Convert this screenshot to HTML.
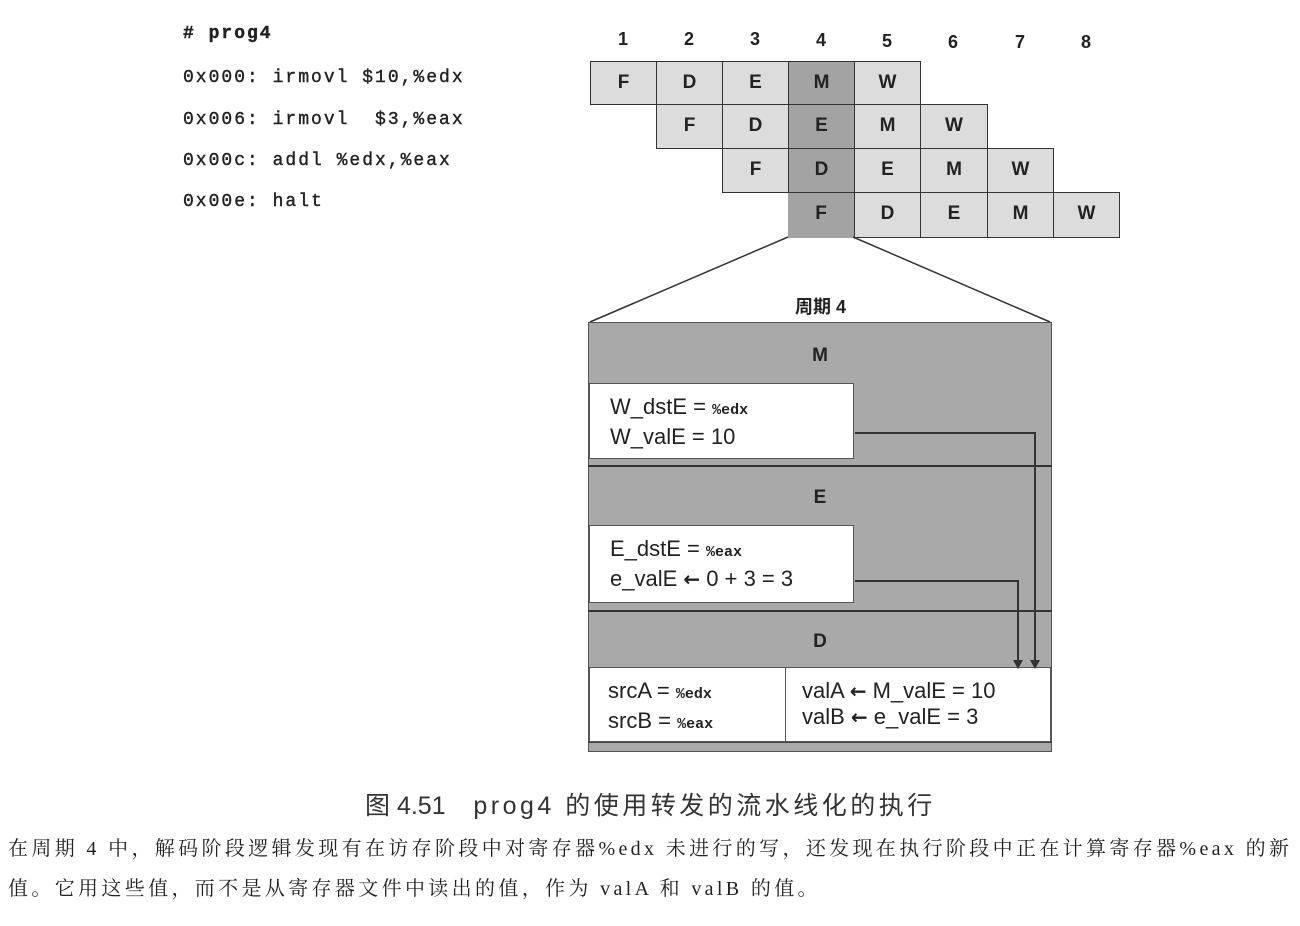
<!DOCTYPE html>
<html><head><meta charset="utf-8"><style>
body{margin:0;width:1300px;height:926px;background:#fff;position:relative;overflow:hidden;font-family:"Liberation Sans","Noto Sans CJK SC",sans-serif;color:#222}
.a{position:absolute}
.code{font-family:"Liberation Mono",monospace;font-size:18px;letter-spacing:2px;color:#222;white-space:pre;-webkit-text-stroke:0.4px #222}
.c{position:absolute;box-sizing:border-box;border:1.5px solid #333;background:#dcdcdc;font-weight:bold;font-size:19px;text-align:center;line-height:41px}
.n{position:absolute;font-weight:bold;font-size:18px;width:66px;text-align:center}
.box{position:absolute;background:#fff;box-sizing:border-box;border:1.5px solid #555;font-size:22px;line-height:26px;padding:10px 0 0 20px;color:#222}
.m{font-family:"Liberation Mono",monospace;font-weight:bold;font-size:15px}
.ar{font-family:"DejaVu Sans",sans-serif;font-weight:bold;font-size:20px}
.lab{position:absolute;left:588px;width:464px;text-align:center;font-weight:bold;font-size:19px}
.p{position:absolute;left:8px;font-family:'Liberation Serif','Noto Serif CJK SC',serif;font-size:20px;white-space:nowrap;letter-spacing:3.35px;color:#222}
</style></head><body>
<div class="a code" style="left:183px;top:24px;font-weight:bold"># prog4</div>
<div class="a code" style="left:183px;top:68px">0x000: irmovl $10,%edx</div>
<div class="a code" style="left:183px;top:110px">0x006: irmovl  $3,%eax</div>
<div class="a code" style="left:183px;top:151px">0x00c: addl %edx,%eax</div>
<div class="a code" style="left:183px;top:192px">0x00e: halt</div>

<div class="n" style="left:590px;top:29px">1</div><div class="n" style="left:656px;top:29px">2</div><div class="n" style="left:722px;top:29px">3</div><div class="n" style="left:788px;top:30px">4</div><div class="n" style="left:854px;top:31px">5</div><div class="n" style="left:920px;top:32px">6</div><div class="n" style="left:987px;top:32px">7</div><div class="n" style="left:1053px;top:32px">8</div>

<div class="c" style="left:590px;top:61px;width:67px;height:44px">F</div>
<div class="c" style="left:656px;top:61px;width:67px;height:44px">D</div>
<div class="c" style="left:722px;top:61px;width:67px;height:44px">E</div>
<div class="c" style="left:854px;top:61px;width:67px;height:44px">W</div>
<div class="c" style="left:656px;top:104px;width:67px;height:45px">F</div>
<div class="c" style="left:722px;top:104px;width:67px;height:45px">D</div>
<div class="c" style="left:854px;top:104px;width:67px;height:45px">M</div>
<div class="c" style="left:920px;top:104px;width:68px;height:45px">W</div>
<div class="c" style="left:722px;top:148px;width:67px;height:45px">F</div>
<div class="c" style="left:854px;top:148px;width:67px;height:45px">E</div>
<div class="c" style="left:920px;top:148px;width:68px;height:45px">M</div>
<div class="c" style="left:987px;top:148px;width:67px;height:45px">W</div>
<div class="c" style="left:854px;top:192px;width:67px;height:46px">D</div>
<div class="c" style="left:920px;top:192px;width:68px;height:46px">E</div>
<div class="c" style="left:987px;top:192px;width:67px;height:46px">M</div>
<div class="c" style="left:1053px;top:192px;width:67px;height:46px">W</div>
<div class="c" style="left:788px;top:61px;width:67px;height:44px;background:#a3a3a3">M</div>
<div class="c" style="left:788px;top:104px;width:67px;height:45px;background:#a3a3a3">E</div>
<div class="c" style="left:788px;top:148px;width:67px;height:45px;background:#a3a3a3">D</div>
<div class="c" style="left:788px;top:192px;width:67px;height:46px;background:#a3a3a3;border-left:none;border-bottom:none">F</div>

<svg class="a" style="left:0;top:0" width="1300" height="926">
<line x1="788" y1="237" x2="590" y2="322" stroke="#333" stroke-width="1.5"/>
<line x1="853" y1="237" x2="1050" y2="322" stroke="#333" stroke-width="1.5"/>
</svg>
<div class="a" style="left:795px;top:293px;font-size:18px;font-weight:bold">周期 4</div>

<div class="a" style="left:588px;top:322px;width:464px;height:430px;background:#a9a9a9;box-sizing:border-box;border:1.5px solid #555"></div>
<div class="lab" style="top:345px">M</div>
<div class="a" style="left:588px;top:465px;width:464px;height:2px;background:#333"></div>
<div class="lab" style="top:487px">E</div>
<div class="a" style="left:588px;top:610px;width:464px;height:2px;background:#333"></div>
<div class="lab" style="top:631px">D</div>
<div class="a" style="left:588px;top:741px;width:464px;height:2px;background:#444"></div>

<div class="box" style="left:589px;top:383px;width:265px;height:76px">W_dstE = <span class="m">%edx</span><br>W_valE = 10</div>
<div class="box" style="left:589px;top:525px;width:265px;height:78px">E_dstE = <span class="m">%eax</span><br>e_valE <span class="ar">←</span> 0 + 3 = 3</div>
<div class="box" style="left:589px;top:667px;width:197px;height:75px;padding-left:18px">srcA = <span class="m">%edx</span><br>srcB = <span class="m">%eax</span></div>
<div class="box" style="left:785px;top:667px;width:266px;height:75px;padding-left:16px">valA <span class="ar">←</span> M_valE = 10<br>valB <span class="ar">←</span> e_valE = 3</div>

<svg class="a" style="left:0;top:0" width="1300" height="926">
<polyline points="855,433 1035,433 1035,662" fill="none" stroke="#333" stroke-width="2"/>
<polyline points="855,581 1018,581 1018,662" fill="none" stroke="#333" stroke-width="2"/>
<polygon points="1030,660 1040,660 1035,669" fill="#333"/>
<polygon points="1013,660 1023,660 1018,669" fill="#333"/>
</svg>

<div class="a" style="left:365px;top:786px;font-size:25px;color:#333;white-space:nowrap">图 4.51&nbsp;&nbsp;&nbsp;&nbsp;<span style="letter-spacing:3.5px">prog4 的使用转发的流水线化的执行</span></div>
<div class="p" style="top:832px">在周期 4 中，解码阶段逻辑发现有在访存阶段中对寄存器%edx 未进行的写，还发现在执行阶段中正在计算寄存器%eax 的新</div>
<div class="p" style="top:872px">值。它用这些值，而不是从寄存器文件中读出的值，作为 valA 和 valB 的值。</div>
</body></html>
